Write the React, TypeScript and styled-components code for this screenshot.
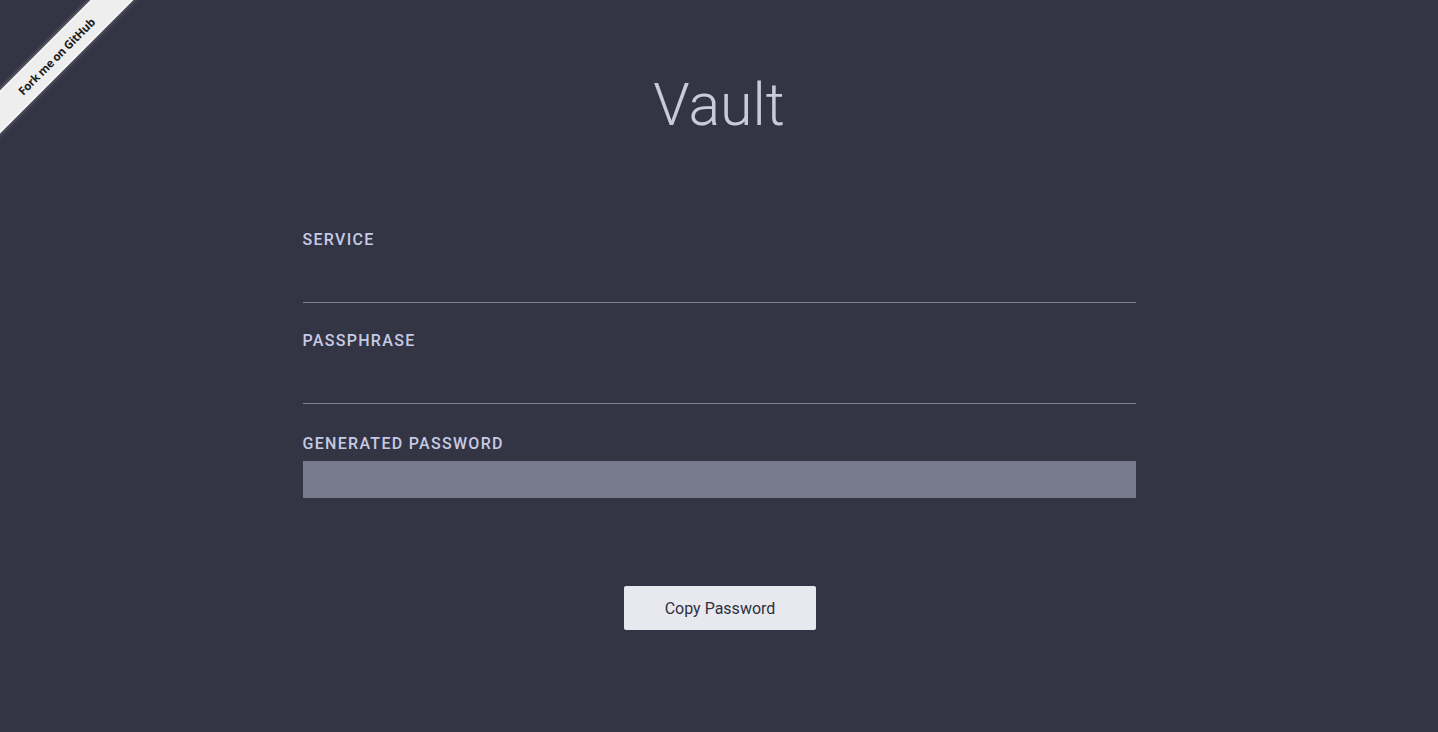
import React from "react"
import styled, { createGlobalStyle } from "styled-components"

const GlobalStyle = createGlobalStyle`
    html, body {
        margin: 0;
        padding: 0;
        background: #333444;
        font-family: Roboto, "Liberation Sans", Arial, sans-serif;
    }
`

const Page = styled.div`
    min-height: 732px;
    display: flex;
    flex-direction: column;
    align-items: center;
    padding-top: 71px;
    box-sizing: border-box;
`

const Ribbon = styled.a`
    position: absolute;
    top: 0;
    left: 0;
    width: 150px;
    height: 150px;
    overflow: hidden;
    text-decoration: none;
`

const RibbonBand = styled.span`
    position: absolute;
    left: -54px;
    top: 41px;
    width: 220px;
    height: 28px;
    transform: rotate(-45deg);
    background: #eeeeee;
    border-top: 1px solid #fafafa;
    border-bottom: 1px solid #fafafa;
    box-shadow: 0 0 5px rgba(255, 255, 255, 0.5), 0 1px 3px rgba(0, 0, 0, 0.35);
    display: flex;
    align-items: center;
    justify-content: center;
    color: #1c1c1c;
    font-family: "Open Sans", "Liberation Sans", sans-serif;
    font-weight: 700;
    font-size: 11.5px;
    letter-spacing: -0.3px;
`

const Titulo = styled.h1`
    margin: 0;
    font-weight: 300;
    font-size: 59px;
    line-height: 68px;
    color: #c9cbdc;
`

const Formulario = styled.form`
    width: 833px;
    margin-top: 91px;
    display: flex;
    flex-direction: column;
`

const Campo = styled.div<{ $espaco?: number }>`
    display: flex;
    flex-direction: column;
    margin-bottom: ${p => p.$espaco ?? 28}px;
`

const Rotulo = styled.label`
    font-size: 16px;
    font-weight: 500;
    letter-spacing: 1.3px;
    line-height: 19px;
    color: #c6cae3;
`

const Entrada = styled.input`
    background: transparent;
    border: none;
    border-bottom: 1px solid #7c7e8e;
    height: 53px;
    outline: none;
    color: #e0e2ee;
    font-size: 18px;
    font-family: inherit;
    padding: 0;
`

const Gerada = styled.input`
    margin-top: 8px;
    height: 37px;
    border: none;
    background: #787b8d;
    padding: 0 10px;
    color: #fff;
    font-size: 16px;
    font-family: inherit;
    outline: none;
`

const Botao = styled.button`
    margin-top: 88px;
    margin-left: 2px;
    width: 192px;
    height: 44px;
    border: none;
    border-radius: 2px;
    background: #e8e9ef;
    color: #2f3040;
    font-family: inherit;
    font-size: 16px;
    cursor: pointer;
`

export default function App() {
    return (
        <>
            <GlobalStyle />
            <Ribbon href="#">
                <RibbonBand>Fork me on GitHub</RibbonBand>
            </Ribbon>
            <Page>
                <Titulo>Vault</Titulo>
                <Formulario onSubmit={e => e.preventDefault()}>
                    <Campo>
                        <Rotulo>SERVICE</Rotulo>
                        <Entrada type="text" />
                    </Campo>
                    <Campo $espaco={30}>
                        <Rotulo>PASSPHRASE</Rotulo>
                        <Entrada type="password" />
                    </Campo>
                    <Campo $espaco={0}>
                        <Rotulo>GENERATED PASSWORD</Rotulo>
                        <Gerada type="text" readOnly />
                    </Campo>
                </Formulario>
                <Botao type="button">Copy Password</Botao>
            </Page>
        </>
    )
}
